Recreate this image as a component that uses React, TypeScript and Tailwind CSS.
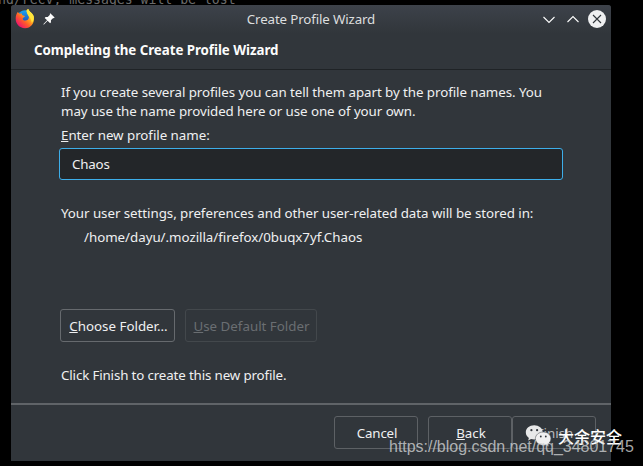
import type { ReactNode } from 'react';

function FirefoxLogo() {
  return (
    <svg width="20" height="20" viewBox="0 0 20 20">
      <defs>
        <linearGradient id="flame" x1="0.85" y1="0.1" x2="0.15" y2="0.85">
          <stop offset="0" stopColor="#fff44f" />
          <stop offset="0.35" stopColor="#ffb01f" />
          <stop offset="0.65" stopColor="#ff5b2a" />
          <stop offset="1" stopColor="#f0156b" />
        </linearGradient>
        <linearGradient id="globe" x1="0.5" y1="0" x2="0.5" y2="1">
          <stop offset="0" stopColor="#1aa7f5" />
          <stop offset="1" stopColor="#2438a8" />
        </linearGradient>
      </defs>
      <circle cx="10" cy="8.6" r="7.4" fill="url(#globe)" />
      <path
        d="M2.4 3.2 C3.4 3.4 4.2 4 4.7 4.8 C5.6 4.4 6.4 4.5 7 4.7 C6.6 5.5 7 6.4 9.9 6.9 C9.8 8 8.2 8.2 7.7 9.2 C7.5 11.2 9.6 12 11.5 11.3 C13.6 10.7 14.4 8.8 13.6 7 C12.9 5.2 11.4 4 11.6 1 C12.4 .2 13.2 .2 13.6 .4 C14 2.4 18 4 18.8 7.4 C20 14 15.6 19.2 10 19.2 C4.2 19.2 .6 14.8 .7 9.6 C.7 7 1.3 5 2.4 3.2Z"
        fill="url(#flame)"
      />
      <path d="M11.6 1.4 C12.1 .6 13 .2 13.6 .4 C14 2.8 18 4.2 18.8 8 C19 11 17.6 13 16.7 13.7 C17 9 11.7 6.6 11.6 1.4Z" fill="#ffe53b" />
    </svg>
  );
}

function PinIcon() {
  return (
    <svg width="12" height="12" viewBox="0 0 12 12" fill="#fcfcfc">
      <path d="M7.3.3 11.6 4.6 10.9 5.2 10.2 5 7.9 7.3 8 9.3 7.1 10.2 4.6 7.8 1 11.4.4 11.6.5 11 4.1 7.3 1.7 4.9 2.6 4 4.7 4.1 7 1.8 6.7 1Z" />
    </svg>
  );
}

function WeChatLogo() {
  return (
    <svg width="28" height="24" viewBox="0 0 28 23">
      <path d="M9.2.8C4.4.8.8 3.8.8 7.8c0 2.3 1.2 4.3 3.1 5.6L3.1 16l3-1.5c1 .3 2 .5 3.1.5 4.7 0 8.5-3.2 8.5-7.2S13.900.8 9.200.8Z" fill="#e8e9e9" />
      <path d="M18.3 7.5c-4.4 0-7.9 2.9-7.9 6.6s3.5 6.7 7.9 6.7c1 0 1.900-.2 2.700-.4l2.600 1.400-.7-2.300c1.800-1.200 3-3.100 3-5.400 0-3.700-3.300-6.600-7.600-6.600Z" fill="#f0f0f0" stroke="#555a5e" strokeWidth=".6" />
      <g fill="#31363b">
        <circle cx="6.4" cy="5.7" r="1.1" />
        <circle cx="12.1" cy="5.7" r="1.1" />
        <circle cx="15.8" cy="12" r=".9" />
        <circle cx="20.8" cy="12" r=".9" />
      </g>
    </svg>
  );
}

function Key({ children }: { children: ReactNode }) {
  return <span className="underline decoration-1 underline-offset-1">{children}</span>;
}

function Button({ className, children }: { className: string; children: ReactNode }) {
  return (
    <button className={`flex h-[33px] shrink-0 items-center justify-center whitespace-pre rounded-[3px] border pl-[2px] pt-[2px] ${className}`}>
      <span>{children}</span>
    </button>
  );
}

export default function App() {
  return (
    <div className="relative h-[466px] w-[643px] overflow-hidden bg-black pl-[11px] pt-[5px] font-['Noto_Sans',sans-serif] text-[13.33px] leading-[19px] text-[#eff0f1]">
      <div className="absolute -left-[2px] top-[-8px] whitespace-pre font-['DejaVu_Sans_Mono',monospace] text-[13.17px] leading-4 text-[#6b6b6b]">
        nd/recv, messages will be lost
      </div>

      <div className="relative flex h-[456px] w-[600px] flex-col overflow-hidden rounded-t-[3px] bg-[#31363b]">
        <header className="flex h-[65px] shrink-0 flex-col border-b border-[#1f2326] bg-linear-to-b from-[#3d424a] to-[#31363b] to-45%">
          <div className="flex h-7 items-center pl-1 pr-1">
            <FirefoxLogo />
            <div className="ml-2 w-[60px]"><PinIcon /></div>
            <div className="flex-1 pr-[24px] text-center tracking-[-0.14px] text-[#dcdedf]">Create Profile Wizard</div>
            <svg width="64" height="18" viewBox="0 0 64 18" fill="none" stroke="#fcfcfc" strokeWidth="1.1">
              <path d="m.5 7 5.5 5.5L11.5 7M24.5 12 30 6.5 35.5 12" />
              <circle cx="54" cy="9" r="9" fill="#eff0f1" stroke="none" />
              <path d="m50 5 8 8M58 5l-8 8" stroke="#31363b" />
            </svg>
          </div>
          <h1 className="mt-2 pl-[23px] font-bold tracking-[-0.05px] text-[#fcfcfc]">Completing the Create Profile Wizard</h1>
        </header>

        <main className="flex flex-1 flex-col whitespace-nowrap pl-[50px] pt-[13px]">
          <p className="tracking-[-0.065px]">
            If you create several profiles you can tell them apart by the profile names. You
            <br />
            may use the name provided here or use one of your own.
          </p>
          <label className="mt-[5px] tracking-[-0.04px]"><Key>E</Key>nter new profile name:</label>
          <div className="-ml-[2px] mt-[3px] flex h-8 w-[504px] items-center rounded-[3px] border border-[#3daee9] bg-[#232629] pl-3 tracking-[-0.2px]">
            Chaos
          </div>
          <p className="mt-6 tracking-[-0.05px]">Your user settings, preferences and other user-related data will be stored in:</p>
          <p className="ml-[23px] mt-[5px] tracking-[-0.03px]">/home/dayu/.mozilla/firefox/0buqx7yf.Chaos</p>
          <div className="-ml-px mt-[62px] flex gap-[10px]">
            <Button className="w-[115px] border-[#666a6e]"><Key>C</Key>hoose Folder...</Button>
            <Button className="w-[132px] border-[#43484c] pl-px text-[#6a6e72]"><Key>U</Key>se Default Folder</Button>
          </div>
          <p className="mt-6 tracking-[-0.14px]">Click Finish to create this new profile.</p>
        </main>

        <footer className="flex h-[58px] shrink-0 justify-end border-t-2 border-[#606468] pr-[15px] pt-[11px]">
          <Button className="mr-[10px] w-[84px] border-[#5d6165] tracking-[-0.2px]">Cancel</Button>
          <Button className="w-[84px] border-[#5d6165]"><Key>B</Key>ack</Button>
          <Button className="w-[84px] border-[#5d6165] text-[#b9bcbe]">Finish</Button>
        </footer>
      </div>

      <div className="absolute left-[525px] top-[424px] flex items-center gap-[5px] whitespace-nowrap font-['Noto_Sans_CJK_SC',sans-serif] text-base font-medium text-white">
        <WeChatLogo />
        <span>大余安全</span>
      </div>
      <div className="absolute left-[389px] top-[435px] whitespace-nowrap font-['Liberation_Sans',sans-serif] text-base tracking-[-0.02px] text-[#d0d2d3]/80">
        https://blog.csdn.net/qq_34801745
      </div>
    </div>
  );
}
